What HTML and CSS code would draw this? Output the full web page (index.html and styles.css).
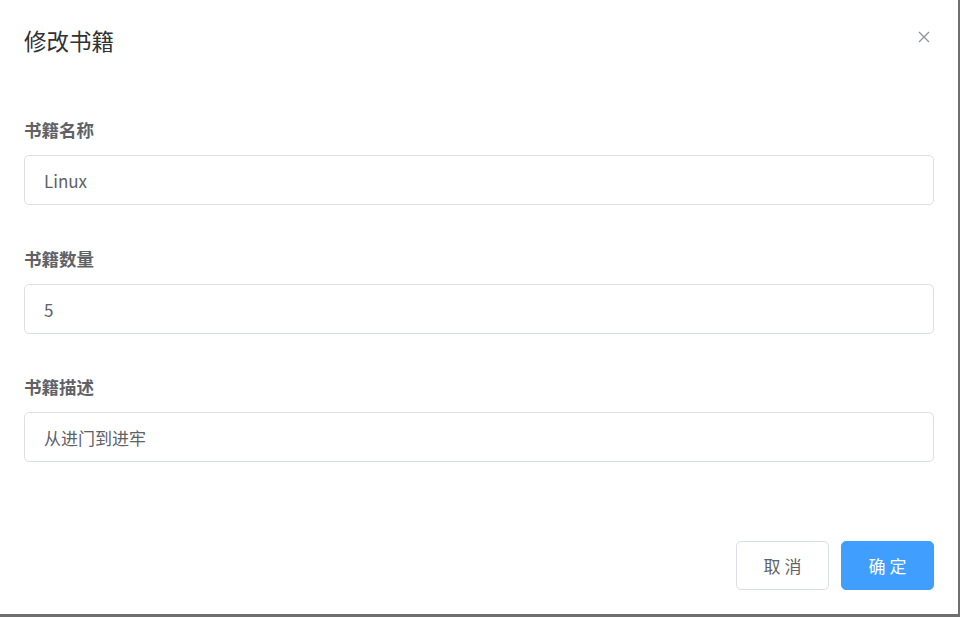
FILE: index.html
```html
<!DOCTYPE html>
<html lang="zh">
<head>
<meta charset="utf-8">
<title>修改书籍</title>
<link rel="stylesheet" href="styles.css">
</head>
<body>
<div class="dialog">
  <div class="dialog-header">
    <span class="dialog-title">修改书籍</span>
    <button class="close-btn" aria-label="关闭">
      <svg width="12" height="12" viewBox="0 0 12 12"><path d="M1 1L11 11M11 1L1 11" stroke="#909399" stroke-width="1.3" fill="none"/></svg>
    </button>
  </div>
  <div class="dialog-body">
    <div class="form-item">
      <label class="form-label">书籍名称</label>
      <div class="input">Linux</div>
    </div>
    <div class="form-item">
      <label class="form-label">书籍数量</label>
      <div class="input">5</div>
    </div>
    <div class="form-item last">
      <label class="form-label">书籍描述</label>
      <div class="input">从进门到进牢</div>
    </div>
  </div>
  <div class="dialog-footer">
    <button class="btn">取 消</button>
    <button class="btn btn-primary">确 定</button>
  </div>
</div>
</body>
</html>
```
FILE: styles.css
```css
html, body {
  margin: 0;
  padding: 0;
  background: #6f6f6f;
  height: 100%;
  overflow: hidden;
}
body {
  font-family: "Noto Sans CJK SC", "Noto Sans", sans-serif;
}
.dialog {
  width: 958px;
  height: 614px;
  background: #fff;
  box-sizing: border-box;
  display: flex;
  flex-direction: column;
}
.dialog-header {
  display: flex;
  align-items: center;
  justify-content: space-between;
  padding: 25px 28px 0 24px;
  height: 30px;
}
.dialog-title {
  font-size: 22.5px;
  line-height: 30px;
  color: #303133;
}
.close-btn {
  border: 0;
  background: none;
  padding: 0;
  width: 12px;
  height: 12px;
  display: flex;
  margin-top: -6px;
}
.dialog-body {
  padding: 63px 24px 0 24px;
}
.form-item {
  display: flex;
  flex-direction: column;
  margin-bottom: 42px;
}
.form-item.last {
  margin-top: -1px;
}
.form-label {
  font-size: 17.5px;
  line-height: 24px;
  font-weight: bold;
  color: #606266;
  margin-bottom: 13px;
}
.input {
  height: 50px;
  box-sizing: border-box;
  border: 1px solid #dcdfe6;
  border-radius: 5px;
  padding: 0 19px;
  display: flex;
  align-items: center;
  font-size: 17px;
  color: #606266;
}
.dialog-footer {
  display: flex;
  justify-content: flex-end;
  gap: 12px;
  padding: 37px 24px 0 24px;
}
.btn {
  width: 93px;
  height: 49px;
  box-sizing: border-box;
  border: 1px solid #dcdfe6;
  border-radius: 5px;
  background: #fff;
  color: #606266;
  font-family: "Noto Sans CJK SC", sans-serif;
  font-size: 17px;
  padding: 0;
}
.btn-primary {
  background: #409eff;
  border-color: #409eff;
  color: #fff;
}
```
